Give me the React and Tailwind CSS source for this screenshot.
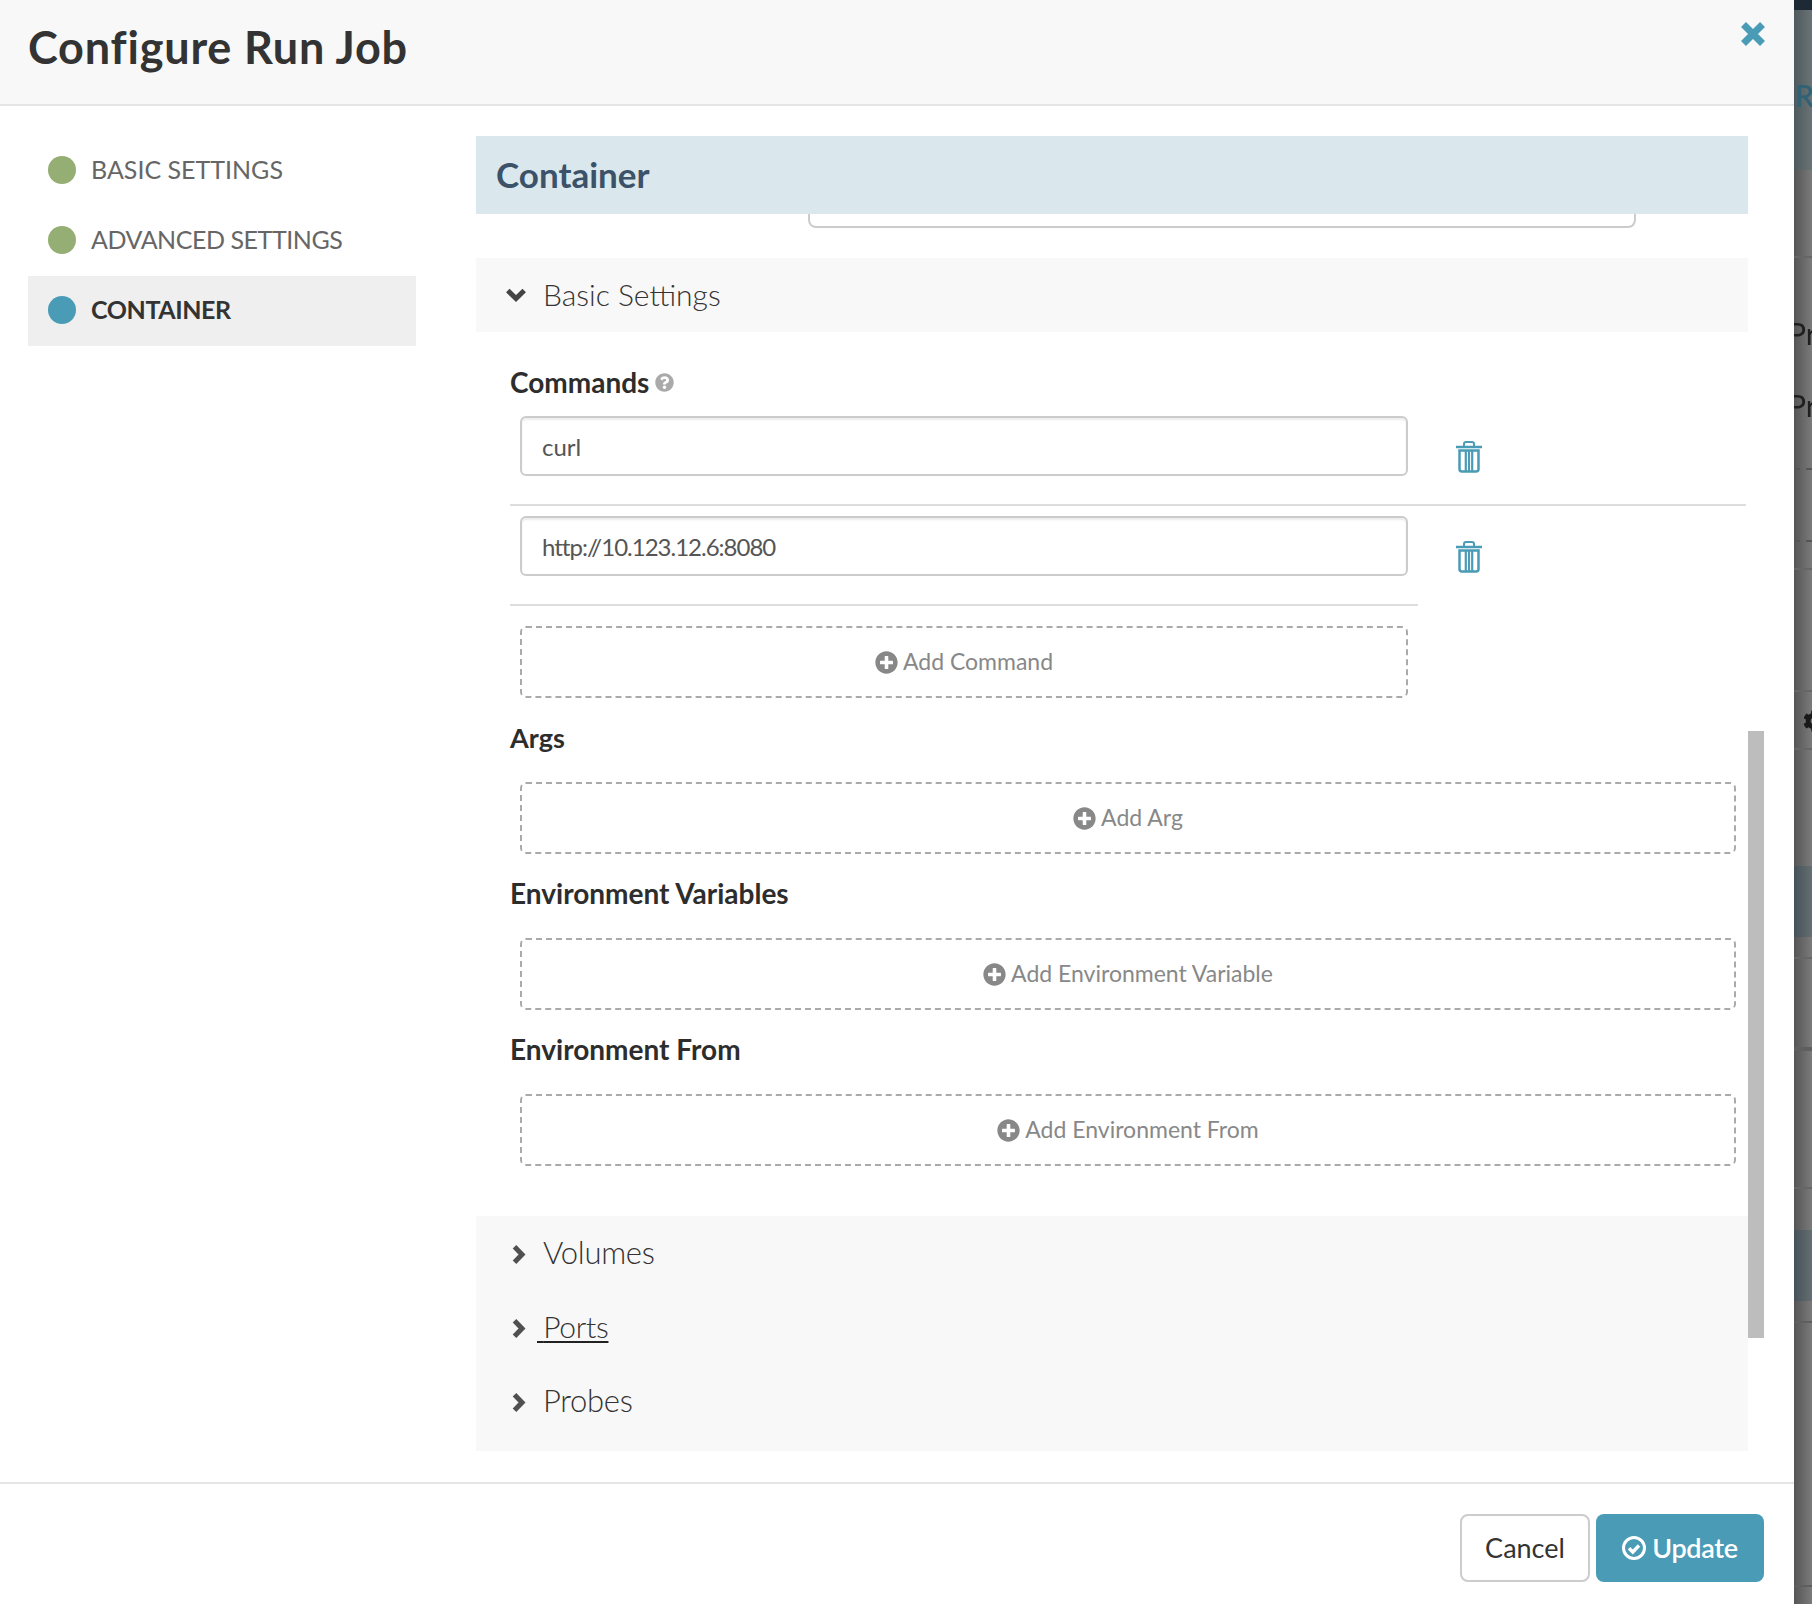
import React from 'react'
import { FaQuestionCircle, FaPlusCircle, FaCog } from 'react-icons/fa'

const TrashIcon = () => (
  <svg width="26" height="32" viewBox="0 0 26 32" fill="none" stroke="#4a9bb5" strokeWidth="2.5">
    <path d="M0 6h26" />
    <path d="M8 6V3a2 2 0 0 1 2-2h6a2 2 0 0 1 2 2v3" strokeWidth="2" />
    <path d="M3.5 9.5v18.5a2.5 2.5 0 0 0 2.5 2.5h14a2.5 2.5 0 0 0 2.5-2.5V9.5z" />
    <path d="M9.8 10v20M13 10v20M16.2 10v20" strokeWidth="2.2" />
  </svg>
)

const ChevronRight = () => (
  <svg width="14" height="19" viewBox="0 0 14 19" fill="none" stroke="#505050" strokeWidth="5" className="mt-[3px]">
    <path d="M2.5 1.8 10 9.5 2.5 17.2" />
  </svg>
)

const ChevronDown = () => (
  <svg width="20" height="14" viewBox="0 0 20 14" fill="none" stroke="#444" strokeWidth="5">
    <path d="M1.8 2.5 10 10.5 18.2 2.5" />
  </svg>
)

const CloseIcon = () => (
  <svg width="24" height="24" viewBox="0 0 24 24" fill="none" stroke="#4a9bb5" strokeWidth="7" className="absolute top-[22px] right-[29px]">
    <path d="M2.5 2.5 21.5 21.5M21.5 2.5 2.5 21.5" />
  </svg>
)

const CheckCircle = () => (
  <svg width="24" height="24" viewBox="0 0 24 24" fill="none" stroke="#fff" strokeWidth="3">
    <circle cx="12" cy="12" r="10.5" />
    <path d="M7 12.2 10.8 16 17 9.5" strokeWidth="3.4" />
  </svg>
)

const NavItem = ({ label, active, done, tight }) => (
  <div className={active ? 'flex items-center h-[70px] mt-[1px] pb-[2px] pl-5 bg-[#efefef]' : 'flex items-center h-[70px] pl-5'}>
    <span className={done ? 'w-7 h-7 rounded-full bg-[#95ae73]' : 'w-7 h-7 rounded-full bg-[#4a9bb5]'}></span>
    <span className={active ? 'ml-[15px] text-[25px] tracking-[-0.4px] font-bold text-[#333]' : tight ? 'ml-[15px] text-[25px] tracking-[-0.45px] text-[#666]' : 'ml-[15px] text-[25px] text-[#666]'}>{label}</span>
  </div>
)

const AddButton = ({ label, narrow }) => (
  <div className={narrow ? 'ml-[44px] w-[888px] h-[72px] flex items-center justify-center gap-[5px] border-2 border-dashed border-[#aaa] rounded-md text-[#888] text-[23px]' : 'ml-[44px] w-[1216px] h-[72px] flex items-center justify-center gap-[5px] border-2 border-dashed border-[#aaa] rounded-md text-[#888] text-[23px]'}>
    <FaPlusCircle size={23} />
    <span className="pb-[2px]">{label}</span>
  </div>
)

const SectionLabel = ({ children, className }) => (
  <div className={`ml-[34px] h-[34px] flex items-center pb-[2px] font-bold text-[#2d2d2d] ${className}`}>{children}</div>
)

const CollapsedRow = ({ label, underline }) => (
  <div className="h-[74px] flex items-center pl-[36px]">
    <ChevronRight />
    {underline ? (
      <span className="ml-[11px] pb-[2px] text-[30px] tracking-[-0.3px] font-light text-[#333] underline decoration-[#222] decoration-2 underline-offset-[3px]">
        <span className="tracking-[-2px]">{'\u00a0'}</span>{label}
      </span>
    ) : (
      <span className="ml-[17px] pb-[2px] text-[31px] tracking-[-0.3px] font-light text-[#333]">{label}</span>
    )}
  </div>
)

const Backdrop = () => (
  <div className="w-[18px] h-full overflow-hidden bg-gradient-to-r from-[#555] to-[#7b7b7b] shrink-0 text-[#1f1f1f] text-[30px] leading-none whitespace-nowrap">
    <div className="h-[10px] bg-[#1d2a36]"></div>
    <div className="h-[160px] pt-[70px] bg-gradient-to-r from-[#4f5a5e] to-[#6a7476] text-[#2f6274] font-semibold">
      <span className="block pl-[1px] blur-[0.5px]">RS</span>
    </div>
    <div className="h-[88px] border-b-2 border-[#666]"></div>
    <div className="h-[312px] pt-[60px] border-b-2 border-[#666]">
      <div className="-ml-[6px] blur-[0.5px]">Pr</div>
      <div className="-ml-[6px] mt-[42px] blur-[0.5px]">Pr</div>
      <div className="mt-[48px] border-t-2 border-dashed border-[#555]"></div>
      <div className="mt-[70px] border-t-2 border-dashed border-[#555]"></div>
    </div>
    <div className="h-[122px] border-b-2 border-[#666]"></div>
    <div className="h-[58px] border-b-2 border-[#666] pt-[18px] pl-[9px] blur-[0.5px]">
      <FaCog size={22} className="text-[#1a1a1a]" />
    </div>
    <div className="h-[116px]"></div>
    <div className="h-[71px] bg-gradient-to-r from-[#46525a] to-[#656f72]"></div>
    <div className="h-[22px] border-b-2 border-[#666]"></div>
    <div className="h-[92px] border-b-4 border-[#5f5f5f]"></div>
    <div className="h-[138px] border-b-2 border-[#666]"></div>
    <div className="h-[41px]"></div>
    <div className="h-[71px] bg-gradient-to-r from-[#46525a] to-[#656f72]"></div>
    <div className="h-[22px] border-b-2 border-[#5f5f5f]"></div>
    <div className="h-[264px] border-b-2 border-[#5f5f5f]"></div>
  </div>
)

const App = () => {
  return (
    <div className="flex w-[1812px] h-[1604px] overflow-hidden bg-white font-['Lato','Liberation_Sans',sans-serif]">
      <div className="w-[1794px] h-full flex flex-col">
        {/* header */}
        <div className="relative h-[106px] shrink-0 bg-[#f8f8f8] border-b-2 border-[#e5e5e5] pl-7 pt-[20px]">
          <h1 className="text-[45px] leading-[54px] tracking-[0.8px] font-bold text-[#333]">Configure Run Job</h1>
          <CloseIcon />
        </div>

        {/* body */}
        <div className="h-[1376px] shrink-0 flex overflow-hidden">
          <div className="w-[476px] shrink-0 pt-[29px]">
            <div className="w-[388px] ml-7">
              <NavItem label="BASIC SETTINGS" done />
              <NavItem label="ADVANCED SETTINGS" done tight />
              <NavItem label="CONTAINER" active />
            </div>
          </div>

          <div className="relative w-[1272px] pt-[30px]">
            <div className="h-[78px] flex items-center pl-5 pb-[2px] bg-[#dae7ec] text-[35px] font-bold text-[#3b5268]">Container</div>
            <div className="ml-[332px] w-[828px] h-[14px] border-x-2 border-b-2 border-[#ccc] rounded-b-lg"></div>

            <div className="mt-[30px] h-[74px] flex items-center pl-[30px] bg-[#f8f8f8]">
              <ChevronDown />
              <span className="ml-[17px] pb-[2px] text-[30px] font-light text-[#333]">Basic Settings</span>
            </div>

            <SectionLabel className="mt-[34px] gap-[6px] text-[28px]">
              Commands <FaQuestionCircle size={19} className="text-[#aaa]" />
            </SectionLabel>

            <div className="ml-[34px] mr-[2px] mt-[16px] flex h-[90px] border-b-2 border-[#ddd]">
              <input readOnly defaultValue="curl" className="ml-[10px] w-[888px] h-[60px] px-[20px] border-2 border-[#ccc] rounded-md text-[24px] text-[#555] shadow-[inset_0_2px_2px_rgba(0,0,0,0.08)]" />
              <div className="ml-[48px] mt-[25px]"><TrashIcon /></div>
            </div>
            <div className="ml-[34px] pt-[10px] flex">
              <div className="w-[908px] h-[90px] border-b-2 border-[#ddd]">
                <input readOnly defaultValue="http://10.123.12.6:8080" className="ml-[10px] w-[888px] h-[60px] px-[20px] border-2 border-[#ccc] rounded-md text-[24px] tracking-[-1px] text-[#555] shadow-[inset_0_2px_2px_rgba(0,0,0,0.08)]" />
              </div>
              <div className="ml-[38px] mt-[25px]"><TrashIcon /></div>
            </div>

            <div className="mt-[20px]"><AddButton label="Add Command" narrow /></div>

            <SectionLabel className="mt-[24px] text-[27px]">Args</SectionLabel>
            <div className="mt-[26px]"><AddButton label="Add Arg" /></div>

            <SectionLabel className="mt-[23px] text-[28px]">Environment Variables</SectionLabel>
            <div className="mt-[27px]"><AddButton label="Add Environment Variable" /></div>

            <SectionLabel className="mt-[23px] text-[28px]">Environment From</SectionLabel>
            <div className="mt-[27px]"><AddButton label="Add Environment From" /></div>

            <div className="mt-[50px] pb-[13px] bg-[#f8f8f8]">
              <CollapsedRow label="Volumes" />
              <CollapsedRow label="Ports" underline />
              <CollapsedRow label="Probes" />
            </div>

            {/* scrollbar thumb */}
            <div className="absolute top-[625px] -right-4 w-4 h-[607px] bg-[#bdbdbd]"></div>
          </div>
          <div className="w-[46px] shrink-0"></div>
        </div>

        {/* footer */}
        <div className="flex-1 border-t-2 border-[#e5e5e5] flex justify-end gap-[6px] pt-[30px] pr-[30px]">
          <button className="w-[130px] h-[68px] border-2 border-[#ccc] rounded-lg bg-white text-[27px] text-[#333]">Cancel</button>
          <button className="w-[168px] h-[68px] rounded-lg bg-[#4a9bb5] text-[27px] tracking-[-0.3px] font-semibold text-white flex items-center justify-center gap-[6px]">
            <CheckCircle />
            Update
          </button>
        </div>
      </div>
      <Backdrop />
    </div>
  )
}

export default App
